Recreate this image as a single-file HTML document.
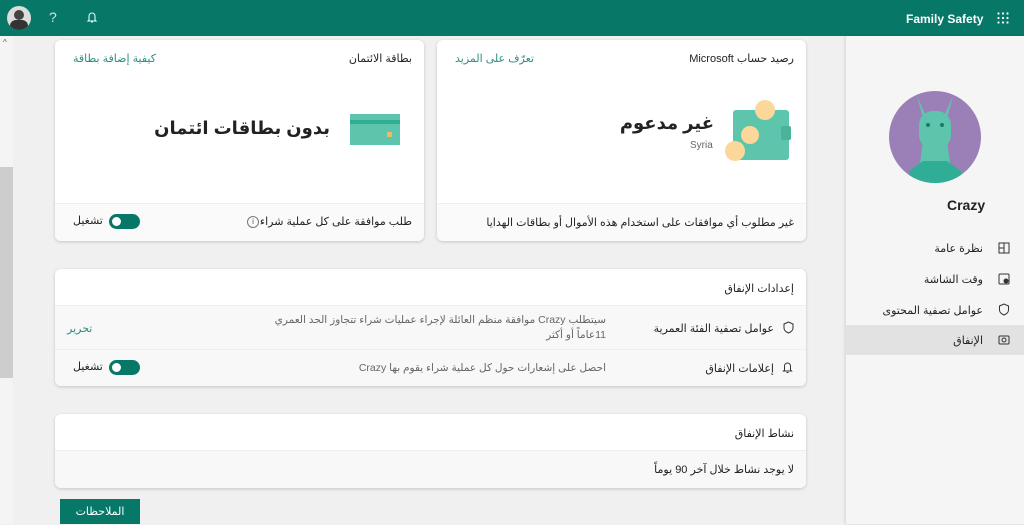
<!DOCTYPE html>
<html><head><meta charset="utf-8"><style>
*{box-sizing:border-box;margin:0;padding:0}
body{width:1024px;height:524px;overflow:hidden;background:#f0f0f0;font-family:"Liberation Sans","DejaVu Sans",sans-serif;color:#222;position:relative}
.abs{position:absolute}
.hdr{left:0;top:0;width:1024px;height:36px;background:#077868}
.card{background:#fff;border-radius:6px;box-shadow:0 1px 3px rgba(0,0,0,.18);overflow:hidden}
.t{position:absolute;white-space:nowrap;direction:rtl;font-size:11px}
.teal{color:#2a8f80}
.foot{position:absolute;left:0;right:0;background:#fafafa;border-top:1px solid #eee}
.tog{position:absolute;width:31px;height:15px;border-radius:8px;background:#077868}
.tog:after{content:"";position:absolute;left:3px;top:3px;width:9px;height:9px;border-radius:50%;background:#fff}
.side{left:846px;top:36px;width:178px;height:488px;background:#f5f5f5;box-shadow:-1px 0 3px rgba(0,0,0,.12)}
</style></head><body>
<div class="abs hdr"></div>
<div class="abs" style="left:7px;top:6px;width:24px;height:24px;border-radius:50%;background:#ddd;overflow:hidden"><div style="position:absolute;left:7px;top:4px;width:10px;height:10px;border-radius:50%;background:#444"></div><div style="position:absolute;left:3px;top:14px;width:18px;height:12px;border-radius:6px;background:#333"></div></div>
<div class="abs" style="left:49px;top:9px;color:#cfe7e3;font-size:14px">?</div>
<svg class="abs" style="left:86px;top:11px" width="12" height="13" viewBox="0 0 12 13"><path d="M3 9V5a3 3 0 0 1 6 0v4l1 1H2z M5 11h2" fill="none" stroke="#dff" stroke-width="1.1"/></svg>
<div class="abs" style="left:906px;top:12px;color:#fff;font-size:12px;font-weight:bold">Family Safety</div>
<svg class="abs" style="left:997px;top:12px" width="12" height="12"><g fill="#fff"><circle cx="1.5" cy="1.5" r="1.1"/><circle cx="6" cy="1.5" r="1.1"/><circle cx="10.5" cy="1.5" r="1.1"/><circle cx="1.5" cy="6" r="1.1"/><circle cx="6" cy="6" r="1.1"/><circle cx="10.5" cy="6" r="1.1"/><circle cx="1.5" cy="10.5" r="1.1"/><circle cx="6" cy="10.5" r="1.1"/><circle cx="10.5" cy="10.5" r="1.1"/></g></svg>
<div class="abs" style="left:0;top:36px;width:13px;height:488px;background:#f4f4f4"></div>
<div class="abs" style="left:0;top:167px;width:13px;height:211px;background:#cdcdcd"></div>
<div class="abs" style="left:3px;top:38px;font-size:8px;color:#555">^</div>
<div class="abs card" style="left:55px;top:40px;width:369px;height:201px">
<div class="t" style="right:12px;top:12px">بطاقة الائتمان</div>
<div class="t teal" style="left:18px;top:12px">كيفية إضافة بطاقة</div>
<div class="abs" style="left:295px;top:74px;width:50px;height:31px;background:#5ec5ad"><div style="position:absolute;top:6px;left:0;right:0;height:4px;background:#2fae95"></div><div style="position:absolute;right:8px;top:18px;width:5px;height:5px;background:#f4b860"></div></div>
<div class="t" style="right:94px;top:78px;font-size:18px;font-weight:bold;color:#222">بدون بطاقات ائتمان</div>
<div class="foot" style="top:163px;height:38px">
<div class="t" style="right:12px;top:11px">طلب موافقة على كل عملية شراء</div>
<div class="abs" style="left:192px;top:12px;width:12px;height:12px;border:1px solid #777;border-radius:50%;font-size:8px;text-align:center;line-height:10px;color:#555">i</div>
<div class="tog" style="left:54px;top:10px"></div>
<div class="t" style="left:18px;top:10px">تشغيل</div>
</div></div>
<div class="abs card" style="left:437px;top:40px;width:369px;height:201px">
<div class="t" style="right:12px;top:12px">رصيد حساب Microsoft</div>
<div class="t teal" style="left:18px;top:12px">تعرّف على المزيد</div>
<div class="abs" style="left:296px;top:70px;width:56px;height:50px;background:#5ec5ad;border-radius:3px"></div>
<div class="abs" style="left:344px;top:86px;width:10px;height:14px;background:#4bb39c;border-radius:2px"></div>
<div class="abs" style="left:318px;top:60px;width:20px;height:20px;border-radius:50%;background:#fbd79a"></div>
<div class="abs" style="left:304px;top:86px;width:18px;height:18px;border-radius:50%;background:#fbd79a"></div>
<div class="abs" style="left:288px;top:101px;width:20px;height:20px;border-radius:50%;background:#fbd79a"></div>
<div class="t" style="right:92px;top:73px;font-size:18px;font-weight:bold">غير مدعوم</div>
<div class="abs" style="left:253px;top:100px;font-size:10px;color:#666">Syria</div>
<div class="foot" style="top:163px;height:38px">
<div class="t" style="right:12px;top:12px">غير مطلوب أي موافقات على استخدام هذه الأموال أو بطاقات الهدايا</div>
</div></div>
<div class="abs card" style="left:55px;top:269px;width:751px;height:117px">
<div class="t" style="right:12px;top:13px">إعدادات الإنفاق</div>
<div class="foot" style="top:36px;height:44px;background:#f8f8f8">
<svg class="abs" style="right:12px;top:15px" width="11" height="13"><path d="M5.5 1L1 3v4c0 2.5 2 4 4.5 5 2.5-1 4.5-2.5 4.5-5V3z" fill="none" stroke="#333"/></svg>
<div class="t" style="right:32px;top:16px">عوامل تصفية الفئة العمرية</div>
<div class="t" style="right:200px;top:8px;font-size:10.5px;color:#666">سيتطلب Crazy موافقة منظم العائلة لإجراء عمليات شراء تتجاوز الحد العمري</div>
<div class="t" style="right:200px;top:23px;font-size:10.5px;color:#666">11عاماً أو أكثر</div>
<div class="t teal" style="left:12px;top:16px">تحرير</div>
</div>
<div class="foot" style="top:80px;height:37px;background:#f8f8f8">
<svg class="abs" style="right:13px;top:11px" width="11" height="13"><path d="M2.5 9V5a3 3 0 0 1 6 0v4l1 1h-8z M4.5 11.5h2" fill="none" stroke="#333"/></svg>
<div class="t" style="right:32px;top:12px">إعلامات الإنفاق</div>
<div class="t" style="right:200px;top:12px;font-size:10.5px;color:#666">احصل على إشعارات حول كل عملية شراء يقوم بها Crazy</div>
<div class="tog" style="left:54px;top:10px"></div>
<div class="t" style="left:18px;top:10px">تشغيل</div>
</div></div>
<div class="abs card" style="left:55px;top:414px;width:751px;height:74px">
<div class="t" style="right:12px;top:13px">نشاط الإنفاق</div>
<div class="foot" style="top:36px;height:38px;background:#f8f8f8">
<div class="t" style="right:12px;top:12px">لا يوجد نشاط خلال آخر 90 يوماً</div>
</div></div>
<div class="abs" style="left:60px;top:499px;width:80px;height:25px;background:#077868;color:#fff;font-size:11px;text-align:center;line-height:26px">الملاحظات</div>
<div class="abs side"></div>
<svg class="abs" style="left:889px;top:91px" width="92" height="92" viewBox="0 0 92 92"><defs><clipPath id="c"><circle cx="46" cy="46" r="46"/></clipPath></defs><circle cx="46" cy="46" r="46" fill="#9b80b8"/><g clip-path="url(#c)" fill="#5ec5ad"><path d="M28 5l6 22h24l6-22-8 18h-20z"/><rect x="30" y="20" width="32" height="38" rx="14"/><path d="M34 50h24l4 30 20 14H10l20-14z"/><path d="M20 80l14-10h24l14 10v14H20z" fill="#2fae95"/></g><circle cx="39" cy="34" r="2" fill="#1d7a6a"/><circle cx="53" cy="34" r="2" fill="#1d7a6a"/></svg>
<div class="abs" style="left:947px;top:197px;font-size:14px;font-weight:bold">Crazy</div>
<div class="abs" style="left:846px;top:325px;width:178px;height:30px;background:#e2e2e2"></div>
<div class="t" style="right:41px;top:242px;font-size:11px">نظرة عامة</div>
<div class="t" style="right:41px;top:273px;font-size:11px">وقت الشاشة</div>
<div class="t" style="right:41px;top:304px;font-size:11px">عوامل تصفية المحتوى</div>
<div class="t" style="right:41px;top:334px;font-size:11px">الإنفاق</div>
<svg class="abs" style="left:998px;top:242px" width="12" height="12"><rect x="1" y="1" width="10" height="10" fill="none" stroke="#333"/><path d="M6 1v10M1 6h5" stroke="#333"/></svg>
<svg class="abs" style="left:998px;top:273px" width="12" height="12"><rect x="1" y="1" width="10" height="10" rx="1" fill="none" stroke="#333"/><circle cx="8" cy="8" r="2.5" fill="#333"/></svg>
<svg class="abs" style="left:998px;top:303px" width="12" height="13"><path d="M6 1L1.5 3v4c0 2.5 2 4 4.5 5 2.5-1 4.5-2.5 4.5-5V3z" fill="none" stroke="#333"/></svg>
<svg class="abs" style="left:998px;top:334px" width="12" height="12"><rect x="1" y="2" width="10" height="8" rx="1" fill="none" stroke="#333"/><circle cx="6" cy="6" r="2" fill="none" stroke="#333"/></svg>
</body></html>
